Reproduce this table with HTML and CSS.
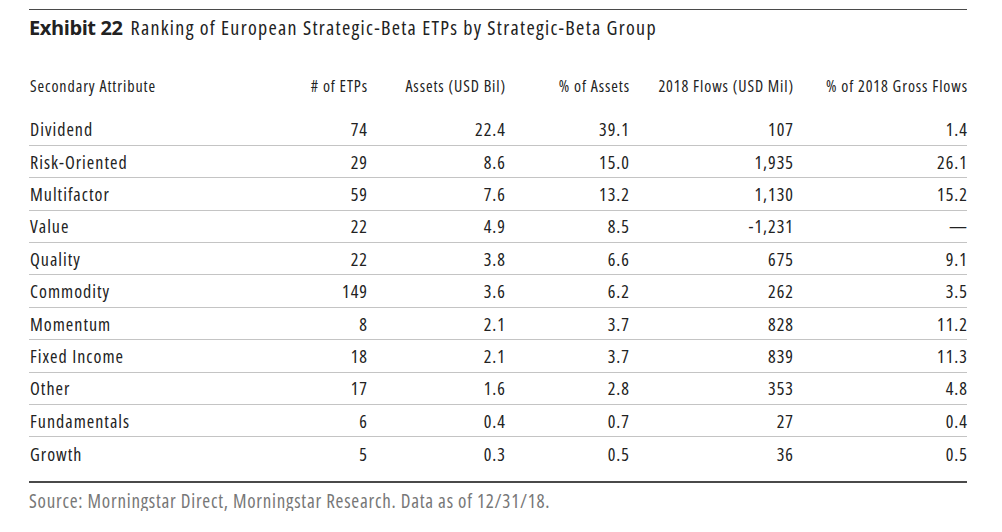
FILE: index.html
```html
<!DOCTYPE html>
<html>
<head>
<meta charset="utf-8">
<link rel="stylesheet" href="styles.css">
</head>
<body>
<div class="exhibit">
  <h1 class="title"><b>Exhibit 22</b> Ranking of European Strategic-Beta ETPs by Strategic-Beta Group</h1>
  <div class="table">
    <div class="row head">
      <span class="name">Secondary Attribute</span>
      <span># of ETPs</span>
      <span>Assets (USD Bil)</span>
      <span>% of Assets</span>
      <span>2018 Flows (USD Mil)</span>
      <span>% of 2018 Gross Flows</span>
    </div>
    <div class="row"><span class="name">Dividend</span><span>74</span><span>22.4</span><span>39.1</span><span>107</span><span>1.4</span></div>
    <div class="row"><span class="name">Risk-Oriented</span><span>29</span><span>8.6</span><span>15.0</span><span>1,935</span><span>26.1</span></div>
    <div class="row"><span class="name">Multifactor</span><span>59</span><span>7.6</span><span>13.2</span><span>1,130</span><span>15.2</span></div>
    <div class="row"><span class="name">Value</span><span>22</span><span>4.9</span><span>8.5</span><span>-1,231</span><span>—</span></div>
    <div class="row"><span class="name">Quality</span><span>22</span><span>3.8</span><span>6.6</span><span>675</span><span>9.1</span></div>
    <div class="row"><span class="name">Commodity</span><span>149</span><span>3.6</span><span>6.2</span><span>262</span><span>3.5</span></div>
    <div class="row"><span class="name">Momentum</span><span>8</span><span>2.1</span><span>3.7</span><span>828</span><span>11.2</span></div>
    <div class="row"><span class="name">Fixed Income</span><span>18</span><span>2.1</span><span>3.7</span><span>839</span><span>11.3</span></div>
    <div class="row"><span class="name">Other</span><span>17</span><span>1.6</span><span>2.8</span><span>353</span><span>4.8</span></div>
    <div class="row"><span class="name">Fundamentals</span><span>6</span><span>0.4</span><span>0.7</span><span>27</span><span>0.4</span></div>
    <div class="row last"><span class="name">Growth</span><span>5</span><span>0.3</span><span>0.5</span><span>36</span><span>0.5</span></div>
  </div>
  <p class="source">Source: Morningstar Direct, Morningstar Research. Data as of 12/31/18.</p>
</div>
</body>
</html>
```

FILE: styles.css
```css
html, body {
  margin: 0;
  padding: 0;
  background: #ffffff;
}
body {
  font-family: "Open Sans", "DejaVu Sans Condensed", sans-serif;
  font-stretch: 75%;
  color: #222222;
}
.exhibit {
  width: 938px;
  margin-left: 29px;
  padding-top: 9px;
}
.title {
  margin: 0;
  border-top: 1px solid #4a4a4a;
  padding-top: 6px;
  font-size: 20px;
  letter-spacing: 1.3px;
  line-height: 24px;
  font-weight: normal;
  color: #222222;
}
.title b {
  font-weight: bold;
  font-stretch: 100%;
  letter-spacing: -0.4px;
  margin-right: 3px;
}
.table {
  margin-top: 28px;
}
.row {
  display: grid;
  grid-template-columns: 238px 100px 138px 124px 164px 174px;
  height: 32.4px;
  box-sizing: border-box;
  align-items: center;
  border-bottom: 1px solid #c4c4c4;
  font-size: 18px;
  letter-spacing: 1px;
}
.row span {
  text-align: right;
  white-space: nowrap;
  margin-right: -1px;
}
.row .name {
  text-align: left;
  padding-left: 1px;
  margin-right: 0;
}
.row.head {
  border-bottom: none;
  font-size: 16px;
  letter-spacing: 0.9px;
  height: 35px;
  margin-bottom: 10.5px;
}
.row.last {
  border-bottom: none;
}
.source {
  margin: 11px 0 0;
  border-top: 2px solid #4a4a4a;
  padding-top: 8px;
  font-size: 19px;
  letter-spacing: 0.75px;
  line-height: 20px;
  color: #777777;
}
```
